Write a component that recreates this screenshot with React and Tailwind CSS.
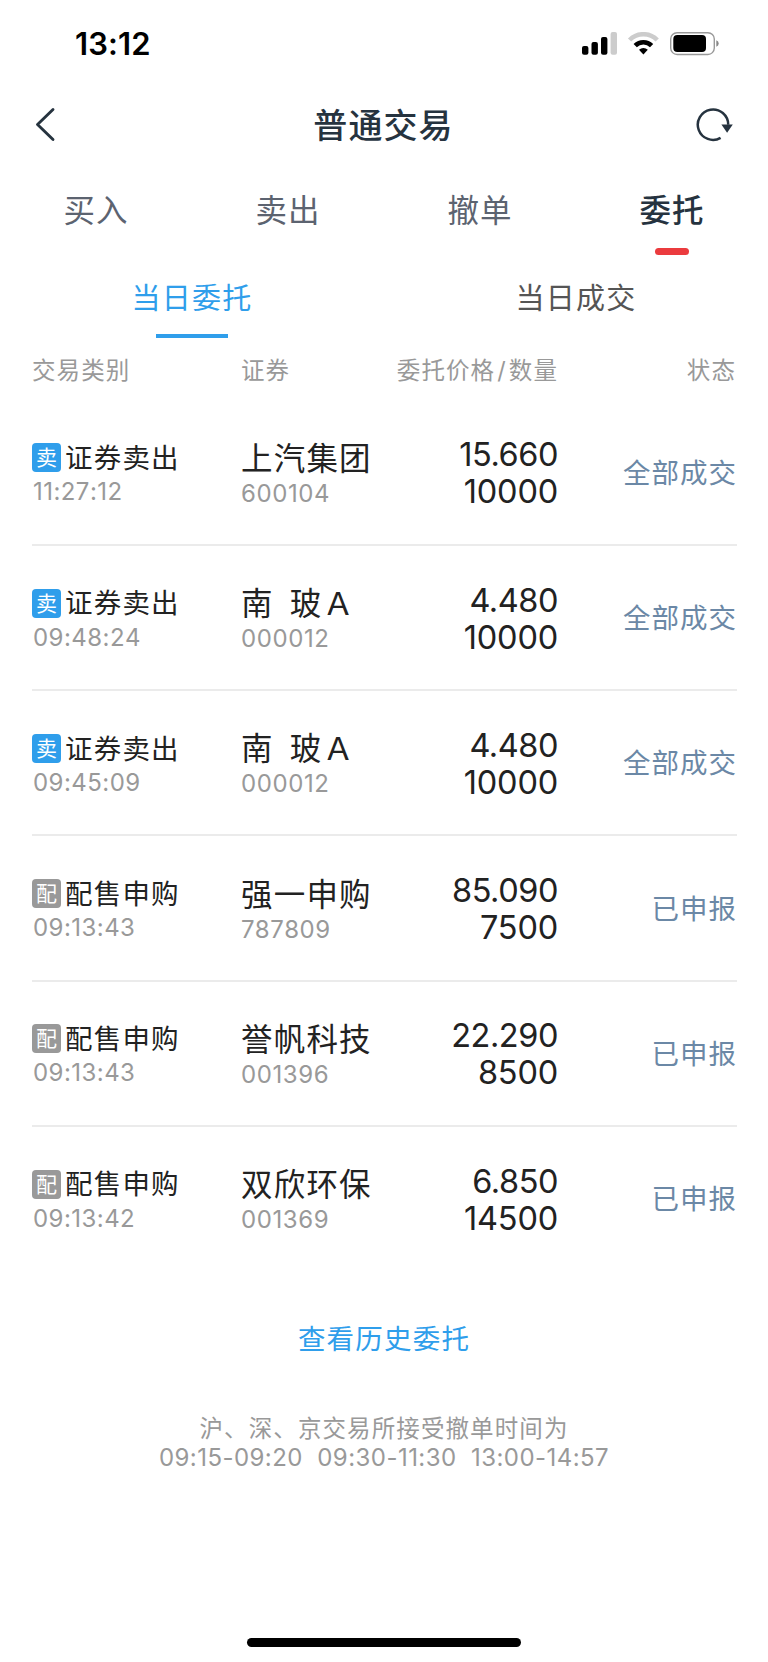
const tabs = ['买入', '卖出', '撤单', '委托'];
const subTabs = ['当日委托', '当日成交'];

const orders = [
    { side: 'sell', type: '证券卖出', time: '11:27:12', name: '上汽集团', code: '600104', price: '15.660', amount: '10000', status: '全部成交' },
    { side: 'sell', type: '证券卖出', time: '09:48:24', name: '南 玻Ａ', code: '000012', price: '4.480', amount: '10000', status: '全部成交' },
    { side: 'sell', type: '证券卖出', time: '09:45:09', name: '南 玻Ａ', code: '000012', price: '4.480', amount: '10000', status: '全部成交' },
    { side: 'allot', type: '配售申购', time: '09:13:43', name: '强一申购', code: '787809', price: '85.090', amount: '7500', status: '已申报' },
    { side: 'allot', type: '配售申购', time: '09:13:43', name: '誉帆科技', code: '001396', price: '22.290', amount: '8500', status: '已申报' },
    { side: 'allot', type: '配售申购', time: '09:13:42', name: '双欣环保', code: '001369', price: '6.850', amount: '14500', status: '已申报' },
];

const badges = {
    sell: { label: '卖', className: 'bg-[#2f9eeb]' },
    allot: { label: '配', className: 'bg-[#999999]' },
};

function StatusBar() {
    return (
        <div className="flex h-[88px] items-center justify-between pr-[48px] pl-[75px]">
            <span className="pb-[2px] text-[31px] leading-none font-semibold tracking-[0.1px] text-black">13:12</span>
            <svg width="138" height="24" viewBox="0 0 138 24">
                {/* 信号 */}
                <rect x="0" y="14" width="6.4" height="8.7" rx="2" />
                <rect x="9.5" y="10" width="6.4" height="12.7" rx="2" />
                <rect x="19" y="5" width="6.4" height="17.7" rx="2" />
                <rect x="28.6" y="0" width="6.4" height="22.7" rx="2" fill="#cccccc" />
                {/* Wi-Fi */}
                <g fill="none" strokeWidth="4.6">
                    <path d="M47.6 8A19.4 19.4 0 0 1 75.2 8" stroke="#cccccc" />
                    <path d="M53.2 13.7A11.6 11.6 0 0 1 69.6 13.7" stroke="#000000" />
                </g>
                <path d="M57 17.8A6.6 6.6 0 0 1 65.8 17.8L61.4 22.5Z" />
                {/* 电池 */}
                <rect x="88.7" y="0.7" width="43.6" height="21.8" rx="6.4" fill="none" stroke="#999999" strokeWidth="1.4" />
                <rect x="91.3" y="3.1" width="32.7" height="16.9" rx="4" />
                <path d="M134.3 8.3Q136.7 9.2 136.7 11.5T134.3 14.8Z" fill="#888888" />
            </svg>
        </div>
    );
}

function NavBar() {
    return (
        <div className="flex h-[73px] items-center justify-between pr-[35px] pl-[35px] text-[#26333f]">
            <svg width="36" height="36" viewBox="0 0 36 36" fill="none" stroke="currentColor" strokeWidth="2.9" strokeLinecap="round" strokeLinejoin="round">
                <path d="M18 2.5L2.5 17.5L18 32.5" />
            </svg>
            <h1 className="pt-[2px] text-[34px] leading-none font-medium tracking-[1.1px]">普通交易</h1>
            <svg width="37" height="36" viewBox="0 0 37 36">
                <path d="M24.6 30.8A15.2 15.2 0 1 1 32.2 17.7" fill="none" stroke="currentColor" strokeWidth="2.5" />
                <path d="M25.4 17.5H36.8L31.1 25.8Z" fill="currentColor" />
            </svg>
        </div>
    );
}

function OrderRow({ order }) {
    const badge = badges[order.side];
    return (
        <li className="flex h-[145.3px] items-center border-b-2 border-[#ebebeb] last:border-transparent">
            <div className="w-[209px] pt-[3px]">
                <div className="flex h-9 items-center gap-[4px]">
                    <span className={`mb-[1px] flex size-[29px] items-center justify-center rounded-[4px] text-[21px] leading-none text-white ${badge.className}`}>
                        {badge.label}
                    </span>
                    <span className="pt-[1px] text-[27.5px] leading-none tracking-[1.2px] text-[#222222]">{order.type}</span>
                </div>
                <div className="pl-px text-[24px] leading-[31px] tracking-[0.45px] text-[#999999] [font-kerning:none]">{order.time}</div>
            </div>
            <div className="w-[150px] pt-[7px]">
                <div className="text-[31.5px] leading-9 tracking-[1.2px] whitespace-pre text-[#222222] [word-spacing:6px]">{order.name}</div>
                <div className="text-[24px] leading-[34px] tracking-[0.6px] text-[#999999]">{order.code}</div>
            </div>
            <div className="w-[167px] pt-[2px] text-right text-[32.5px] leading-[37px] text-[#222222]">
                <div className="tracking-[-0.45px]">{order.price}</div>
                <div className="tracking-[-0.2px]">{order.amount}</div>
            </div>
            <div className="flex-1 pt-[2px] text-right text-[27.5px] tracking-[1px] text-[#6b88a6]">{order.status}</div>
        </li>
    );
}

export default function App() {
    return (
        <div className="flex h-[1662px] w-[768px] flex-col bg-white font-['Inter','Noto_Sans_CJK_SC',sans-serif]">
            <StatusBar />
            <NavBar />

            <nav className="grid h-[96px] grid-cols-4">
                {tabs.map((tab) => (
                    <div
                        key={tab}
                        className={`flex flex-col items-center pt-[25px] text-[31.5px] leading-[50px] tracking-[1px] ${
                            tab === '委托' ? 'font-medium text-[#26333f]' : 'text-[#5c6370]'
                        }`}
                    >
                        {tab}
                        {tab === '委托' && <span className="mt-[12px] h-[7px] w-[34px] rounded-full bg-[#eb3b3e]" />}
                    </div>
                ))}
            </nav>

            <div className="grid h-[83px] grid-cols-2">
                {subTabs.map((tab, index) => (
                    <div
                        key={tab}
                        className={`flex flex-col items-center pt-[21px] text-[29px] leading-[41px] tracking-[1.2px] ${
                            index === 0 ? 'text-[#2f9eeb]' : 'text-[#555555]'
                        }`}
                    >
                        {tab}
                        {index === 0 && <span className="mt-[15px] h-[4px] w-[72px] bg-[#2f9eeb]" />}
                    </div>
                ))}
            </div>

            <div className="flex h-[60.6px] items-center px-[32px] text-[23.5px] tracking-[1.1px] text-[#999999]">
                <span className="w-[209px]">交易类别</span>
                <span className="w-[120px]">证券</span>
                <span className="w-[197px] text-right">
                    委托价格<span className="px-[2px]">/</span>数量
                </span>
                <span className="flex-1 text-right">状态</span>
            </div>

            <ul className="pr-[31px] pl-[32px]">
                {orders.map((order, index) => (
                    <OrderRow key={index} order={order} />
                ))}
            </ul>

            <div className="mt-[47px] text-center text-[27.5px] leading-[40px] tracking-[1.2px] text-[#2f9eeb]">查看历史委托</div>

            <div className="mt-[55px] text-center text-[23.5px] leading-[29px] tracking-[1.1px] text-[#999999]">
                <p>沪、深、京交易所接受撤单时间为</p>
                <p className="text-[24px] tracking-[0.45px] whitespace-pre">09:15-09:20  09:30-11:30  13:00-14:57</p>
            </div>

            <div className="mx-auto mt-auto mb-[15px] h-[9px] w-[274px] rounded-full bg-black" />
        </div>
    );
}
